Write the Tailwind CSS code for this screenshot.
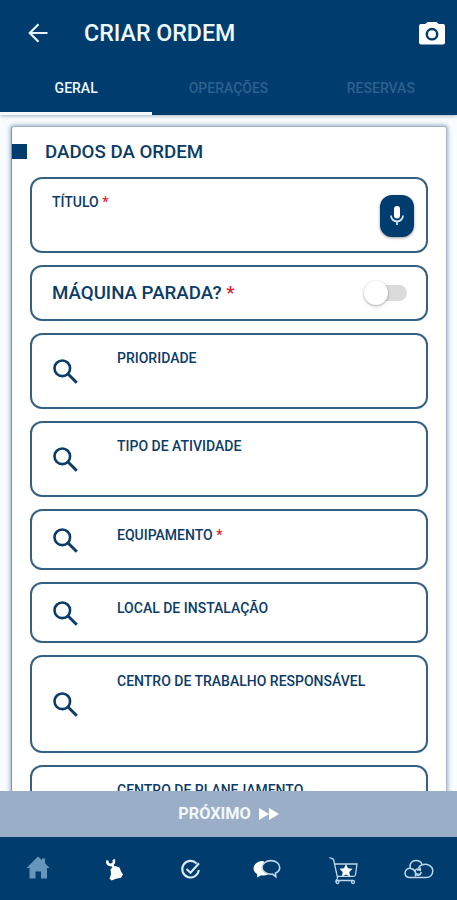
<!DOCTYPE html>
<html lang="pt-BR">
<head>
<meta charset="utf-8">
<meta name="viewport" content="width=device-width, initial-scale=1">
<title>Criar Ordem</title>
<script src="https://cdn.jsdelivr.net/npm/@tailwindcss/browser@4"></script>
</head>
<body class="bg-[#fafdff] font-['Roboto',sans-serif] font-medium text-[#0b3c69]">
<svg class="hidden">
  <symbol id="search" viewBox="0 0 25 25"><g fill="none" stroke="currentColor"><circle cx="9.300" cy="9.300" r="7.800" stroke-width="2.600"/><path d="M14.800 14.800l9 9" stroke-width="2.900"/></g></symbol>
</svg>
<div class="flex h-[900px] w-[457px] flex-col overflow-hidden">
  <header class="relative z-10 flex h-[115px] shrink-0 flex-col bg-[#003c6d] shadow-[0_1px_4px_rgba(0,40,80,0.35)]">
    <div class="flex h-[66px] items-center pr-[12px] pl-[28px]">
      <svg class="h-[20px] w-[20px]" viewBox="0 0 20 20" fill="none" stroke="#e6f1fa" stroke-width="2.200"><path d="M19.500 10H2.500M10.500 1.300 1.800 10l8.700 8.700"/></svg>
      <h1 class="ml-[36px] flex-1 pb-px text-[23.200px] leading-7 whitespace-nowrap text-[#eff8ff]">CRIAR ORDEM</h1>
      <svg class="h-[23px] w-[26px]" viewBox="0 0 26 23"><path fill="#fff" fill-rule="evenodd" d="M8.500 0h9l2.200 2H24a2 2 0 0 1 2 2v16.500a2 2 0 0 1-2 2H2a2 2 0 0 1-2-2V4a2 2 0 0 1 2-2h4.300zM13 5.800a6.400 6.400 0 1 0 0 12.800 6.400 6.400 0 0 0 0-12.800zm0 2.400a4 4 0 1 1 0 8 4 4 0 0 1 0-8z"/></svg>
    </div>
    <nav class="grid h-[49px] grid-cols-3 text-center text-[14px] leading-[45px] text-[#2d618f]">
      <div class="border-b-[3px] border-[#f2f8fc] text-[#eff8ff]">GERAL</div>
      <div>OPERAÇÕES</div>
      <div>RESERVAS</div>
    </nav>
  </header>

  <main class="min-h-0 flex-1 overflow-hidden pt-[11px] pr-[10px] pl-[11px]">
    <section class="h-[760px] rounded-[3px] border border-[#a3b3c6] border-r-[#a9b9ca] border-l-[#7d95aa] bg-white shadow-[0_0_4px_1px_rgba(60,100,145,0.5)]">
      <div class="flex h-[50px] items-center pb-px">
        <span class="h-[15px] w-[15px] bg-[#003c6d]"></span>
        <h2 class="ml-[18px] text-[18.700px] leading-6 whitespace-nowrap">DADOS DA ORDEM</h2>
      </div>
      <div class="flex flex-col gap-[12px] px-[18px] text-[14px] leading-4">
        <div class="flex h-[76px] items-start justify-between rounded-[12px] border-2 border-[#356283] pt-[15px] pr-[12px] pl-[20px]">
          <span>TÍTULO <span class="text-[#e5192d]">*</span></span>
          <span class="mt-[1px] flex h-[42px] w-[34px] items-center justify-center rounded-[12px] bg-[#003c6d] shadow-[0_1px_3px_rgba(0,0,0,0.4)]">
            <svg class="h-[20px] w-[14px]" viewBox="0 0 14 20"><rect x="4" y="0" width="6" height="12.500" rx="3" fill="#fff"/><path d="M1 9.500a6 6 0 0 0 12 0M7 15.500V19" fill="none" stroke="#d5e5f2" stroke-width="1.800"/></svg>
          </span>
        </div>
        <div class="flex h-[56px] items-center justify-between rounded-[12px] border-2 border-[#356283] pr-[19px] pl-[20px]">
          <span class="text-[18.700px]">MÁQUINA PARADA? <span class="text-[#e5192d]">*</span></span>
          <span class="flex h-[24px] w-[43px] items-center">
            <span class="z-10 h-[24px] w-[24px] rounded-full bg-white shadow-[0_1px_3px_rgba(0,0,0,0.35)]"></span>
            <span class="-ml-[15px] h-[16px] w-[34px] rounded-full bg-[#dbdbdb]"></span>
          </span>
        </div>
        <div class="flex h-[76px] rounded-[12px] border-2 border-[#356283] pt-[15px] pl-[21px]">
          <svg class="mt-[9px] mr-[39px] h-[25px] w-[25px]"><use href="#search"/></svg><span>PRIORIDADE</span>
        </div>
        <div class="flex h-[76px] rounded-[12px] border-2 border-[#356283] pt-[15px] pl-[21px]">
          <svg class="mt-[9px] mr-[39px] h-[25px] w-[25px]"><use href="#search"/></svg><span>TIPO DE ATIVIDADE</span>
        </div>
        <div class="flex h-[61px] rounded-[12px] border-2 border-[#356283] pt-[16px] pl-[21px]">
          <svg class="mt-[1px] mr-[39px] h-[25px] w-[25px]"><use href="#search"/></svg><span>EQUIPAMENTO <span class="text-[#e5192d]">*</span></span>
        </div>
        <div class="flex h-[61px] rounded-[12px] border-2 border-[#356283] pt-[16px] pl-[21px]">
          <svg class="mt-[1px] mr-[39px] h-[25px] w-[25px]"><use href="#search"/></svg><span>LOCAL DE INSTALAÇÃO</span>
        </div>
        <div class="flex h-[98px] rounded-[12px] border-2 border-[#356283] pt-[16px] pl-[21px]">
          <svg class="mt-[19px] mr-[39px] h-[25px] w-[25px]"><use href="#search"/></svg><span>CENTRO DE TRABALHO RESPONSÁVEL</span>
        </div>
        <div class="flex h-[98px] rounded-[12px] border-2 border-[#356283] pt-[15px] pl-[21px]">
          <svg class="mt-[30px] mr-[39px] h-[25px] w-[25px]"><use href="#search"/></svg><span>CENTRO DE PLANEJAMENTO</span>
        </div>
      </div>
    </section>
  </main>

  <button class="relative flex h-[46px] shrink-0 items-center justify-center gap-[8px] bg-[#9aafc7] text-[16.300px] font-bold text-[#f3f8fd]">
    <span>PRÓXIMO</span>
    <svg class="h-[12px] w-[20px]" viewBox="0 0 20 12" fill="#fff"><path d="M0 0l10 6-10 6zM10 0l10 6-10 6z"/></svg>
  </button>
  <footer class="grid h-[63px] shrink-0 grid-cols-6 justify-items-center bg-[#003c6d] pt-[15px]">
    <svg class="h-[34px] w-[34px]" viewBox="0 0 34 34"><path fill="#6796bd" d="M17 4.500l4 3.700V6.500h3V11l4.500 5H26v10.500h-6v-7h-5.500v7H8.500V16H5.500z"/></svg>
    <svg class="h-[34px] w-[34px]" viewBox="0 0 34 34"><path d="M10.500 8.500c-.8 3 1 4.800 3.500 4.300 2.800-.5 3.800-3 2.500-5.300M14.500 12l2.500 4" fill="none" stroke="#fff" stroke-width="2.600"/><path fill="#fff" d="M13.500 17l5-3 4 1.500 1.500 4 2 3-2 3.300-5 .9-4.500 1.900-2-2 1.500-4z"/></svg>
    <svg class="h-[34px] w-[34px]" viewBox="0 0 34 34" fill="none" stroke="#d9e9f5" stroke-width="2.100"><path d="M23.600 11.500A8.300 8.300 0 1 0 25.800 18M13.500 17l4 3.700 8.500-9.500"/></svg>
    <svg class="h-[34px] w-[34px]" viewBox="0 0 34 34"><path fill="#fff" d="M13.500 9C8.500 8.500 3.500 12 3.500 16.500c0 2.200 1.300 4.200 3.500 5.400l.3 3.600 3.700-2.200c2.500.5 5 .2 7-.8z"/><path fill="#003c6d" stroke="#bfd7ea" stroke-width="1.600" d="M21 8.600c-5 0-9 2.900-9 6.700s4 6.900 9 6.900l1.500-.1 3.300 2.600-.3-3.600c2.600-1.200 4.200-3.300 4.200-5.700 0-3.900-3.900-6.800-8.700-6.800z"/></svg>
    <svg class="h-[34px] w-[34px]" viewBox="0 0 34 34"><g fill="none" stroke="#bfd7ea" stroke-width="1.300"><path d="M3.500 5.500l4 1.800 4.200 19.200M8.300 12H31l-1.500 10.500c-.2 1.300-.9 1.800-2 1.800H11.300M11.700 26.500c-1.700.8-2.200 3-1 4M11 28.500h16"/><circle cx="11.500" cy="30" r="1.500"/><circle cx="27" cy="30" r="1.500"/></g><path fill="#fff" d="M20 12l2 4.200 4.600.6-3.300 3.200.8 4.600-4.100-2.200-4.100 2.200.8-4.600-3.300-3.200 4.600-.6z"/></svg>
    <svg class="h-[34px] w-[34px]" viewBox="0 0 34 34" fill="none" stroke="#bfd7ea" stroke-width="1.500"><path d="M8.300 16.500C7 11.500 10 8.500 14 8.500c3 0 5.300 1.500 6.200 4.200 5-1.700 10.600 1.500 10.600 6 0 4-2.800 6.800-6.800 6.800H8c-3.400 0-5-2-5-4.500 0-3.300 3.200-5.600 6.800-4.300 2.500.8 3.700 2.500 4 4.300M20.200 12.700c-2 .6-3.200 1.700-3.700 3.300"/><path d="M12.500 20c.5-3 3.700-4 5.800-2v-2.500M18.300 18H15M19.300 20c-.6 3.300-4 4-5.800 2v2.500M13.500 22h3"/></svg>
  </footer>
</div>
</body>
</html>
